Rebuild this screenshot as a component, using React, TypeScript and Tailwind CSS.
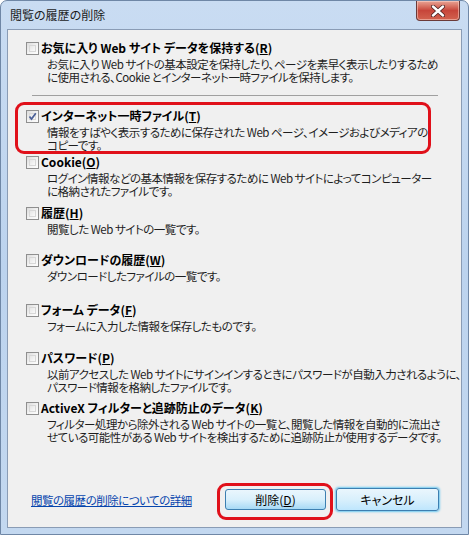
import type { ReactNode } from 'react';

const font = "font-['Noto_Sans_CJK_JP','Noto_Sans',sans-serif] [font-feature-settings:'palt']";

function CheckBox({ checked }: { checked?: boolean }) {
  return (
    <span className="relative mt-[1px] h-[13px] w-[13px] shrink-0 border border-[#8f8f8f] bg-gradient-to-br from-[#dcdcdc] via-[#f2f2f2] to-[#fdfdfd]">
      <span className="absolute inset-[2px] border border-[#d8d8d8] bg-gradient-to-br from-[#e6e6e6] to-[#fafafa]" />
      {checked && (
        <svg viewBox="0 0 11 11" className="absolute inset-0 h-[11px] w-[11px]">
          <path d="M2.5 5.5 L4.5 8 L8.8 2.2" fill="none" stroke="#4a5f97" strokeWidth="1.7" />
        </svg>
      )}
    </span>
  );
}

function Item({
  checked,
  label,
  lines,
  height,
}: {
  checked?: boolean;
  label: ReactNode;
  lines: string[];
  height: string;
}) {
  return (
    <div className={`flex flex-col ${height}`}>
      <div className="flex items-start gap-[2px]">
        <CheckBox checked={checked} />
        <span className="text-[12px] leading-[14px] font-bold text-black">{label}</span>
      </div>
      <div className="mt-[3px] pl-[21px] text-[11.5px] leading-[13px] tracking-[-0.5px] text-[#1e1e1e]">
        {lines.map((l) => (
          <div key={l} className="whitespace-nowrap">
            {l}
          </div>
        ))}
      </div>
    </div>
  );
}

function Key({ k }: { k: string }) {
  return (
    <>
      (<span className="underline">{k}</span>)
    </>
  );
}

export default function App() {
  return (
    <div
      className={`${font} flex h-[535px] w-[469px] flex-col rounded-t-[7px] border border-[#6f87a6] bg-gradient-to-b from-[#c9dcf2] via-[#bcd3ee] to-[#c3d8f0]`}
    >
      <div className="flex h-[28px] shrink-0 items-start">
        <span className="mt-[6px] pl-[9px] text-[12px] leading-[16px] text-[#1b1b1b]">閲覧の履歴の削除</span>
        <button className="mr-[8px] ml-auto flex h-[20px] w-[44px] items-center justify-center rounded-b-[4px] border border-t-0 border-[#6b3a38] bg-gradient-to-b from-[#e8a395] via-[#c7453a] to-[#d2624f] shadow-[inset_0_0_0_1px_rgba(255,220,210,0.5)]">
          <svg viewBox="0 0 14 12" className="h-[12px] w-[14px]">
            <path d="M2 1.5 L12 10.5 M12 1.5 L2 10.5" stroke="#4a2020" strokeWidth="4" strokeLinecap="round" />
            <path d="M2 1.5 L12 10.5 M12 1.5 L2 10.5" stroke="#ffffff" strokeWidth="2.4" strokeLinecap="round" />
          </svg>
        </button>
      </div>

      <div className="relative mx-[6px] flex h-[499px] flex-col border border-[#8a9cb5] bg-[#f0f0f0] pt-[11px] pl-[18px]">
        <Item
          height="h-[54px]"
          label={
            <>
              お気に入り Web サイト データを保持する<Key k="R" />
            </>
          }
          lines={[
            'お気に入り Web サイトの基本設定を保持したり、ページを素早く表示したりするため',
            'に使用される、Cookie とインターネット一時ファイルを保持します。',
          ]}
        />
        <div className="ml-[6px] h-px w-[406px] bg-[#a0a0a0]" />
        <div className="mt-[13px]" />
        <Item
          checked
          height="h-[46px]"
          label={
            <>
              インターネット一時ファイル<Key k="T" />
            </>
          }
          lines={[
            '情報をすばやく表示するために保存された Web ページ、イメージおよびメディアの',
            'コピーです。',
          ]}
        />
        <Item
          height="h-[51px]"
          label={
            <>
              Cookie<Key k="O" />
            </>
          }
          lines={[
            'ログイン情報などの基本情報を保存するために Web サイトによってコンピューター',
            'に格納されたファイルです。',
          ]}
        />
        <Item
          height="h-[47px]"
          label={
            <>
              履歴<Key k="H" />
            </>
          }
          lines={['閲覧した Web サイトの一覧です。']}
        />
        <Item
          height="h-[50px]"
          label={
            <>
              ダウンロードの履歴<Key k="W" />
            </>
          }
          lines={['ダウンロードしたファイルの一覧です。']}
        />
        <Item
          height="h-[48px]"
          label={
            <>
              フォーム データ<Key k="F" />
            </>
          }
          lines={['フォームに入力した情報を保存したものです。']}
        />
        <Item
          height="h-[50px]"
          label={
            <>
              パスワード<Key k="P" />
            </>
          }
          lines={[
            '以前アクセスした Web サイトにサインインするときにパスワードが自動入力されるように、',
            'パスワード情報を格納したファイルです。',
          ]}
        />
        <Item
          height="h-[50px]"
          label={
            <>
              ActiveX フィルターと追跡防止のデータ<Key k="K" />
            </>
          }
          lines={[
            'フィルター処理から除外される Web サイトの一覧と、閲覧した情報を自動的に流出さ',
            'せている可能性がある Web サイトを検出するために追跡防止が使用するデータです。',
          ]}
        />

        <div className="mt-auto mb-[16px] flex items-center pr-[22px]">
          <a href="#" className="ml-[5px] text-[11.5px] leading-[14px] tracking-[-0.5px] text-[#0645ad] underline">
            閲覧の履歴の削除についての詳細
          </a>
          <button className="ml-auto h-[21px] w-[101px] rounded-[3px] border border-[#3c7fb1] bg-gradient-to-b from-[#eaf6fd] via-[#d9f0fc] to-[#a7d9f5] text-[12px] text-black">
            削除(<span className="underline">D</span>)
          </button>
          <button className="ml-[10px] h-[23px] w-[103px] rounded-[3px] border border-[#3c7fb1] bg-gradient-to-b from-[#eaf6fd] via-[#d9f0fc] to-[#bee6fd] text-[12px] text-black shadow-[0_0_2px_1px_#6fc9f0]">
            キャンセル
          </button>
        </div>

        <div className="pointer-events-none absolute top-[72px] left-[7px] h-[52px] w-[416px] rounded-[9px] border-[3px] border-[#e0101a]" />
        <div className="pointer-events-none absolute top-[453px] left-[209px] h-[37px] w-[116px] rounded-[9px] border-[3px] border-[#e0101a]" />
      </div>
    </div>
  );
}
